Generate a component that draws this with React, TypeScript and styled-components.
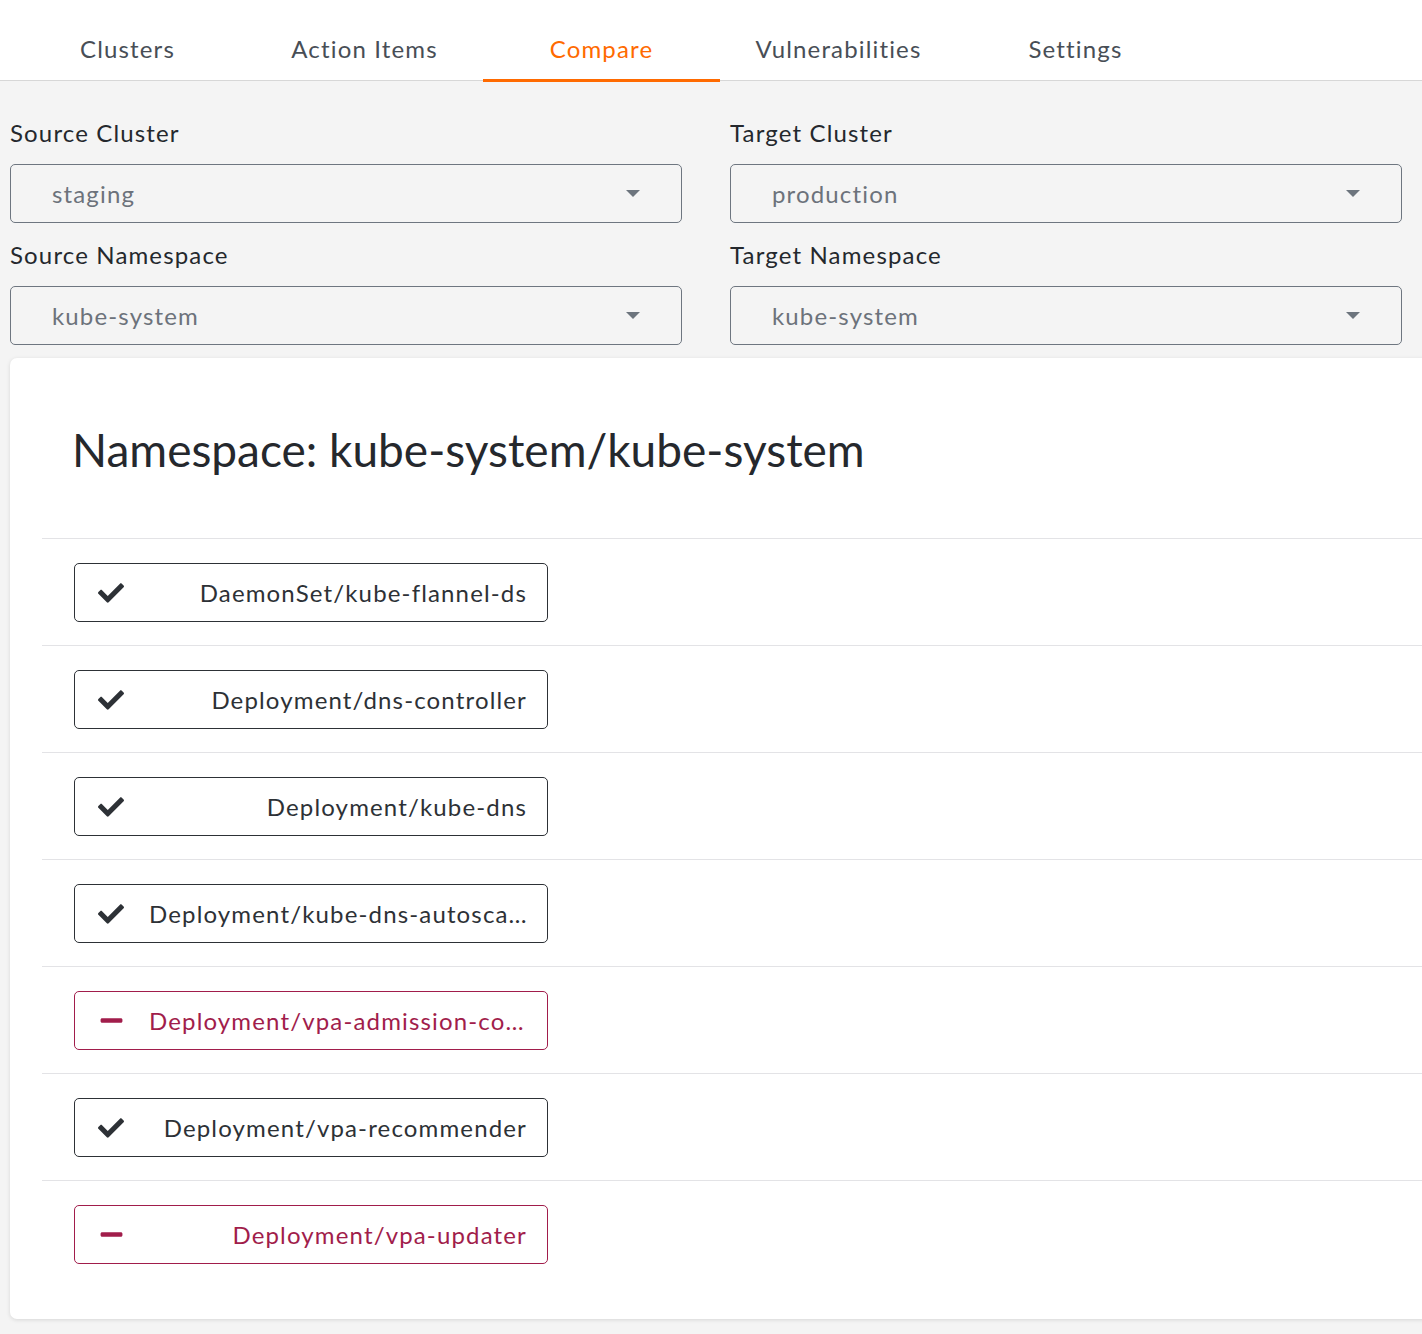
import styled, { createGlobalStyle } from "styled-components";
import { FaCheck, FaMinus } from "react-icons/fa";

const GlobalStyle = createGlobalStyle`
  html, body {
    margin: 0;
    padding: 0;
    background: #f4f4f4;
    overflow-x: hidden;
  }
  body {
    font-family: Lato, "Liberation Sans", sans-serif;
    letter-spacing: 1.15px;
  }
`;

const TabBar = styled.nav`
  display: flex;
  height: 80px;
  padding-left: 9px;
  background: #ffffff;
  border-bottom: 1px solid #d7d7d7;
`;

const Tab = styled.div<{ $active?: boolean }>`
  position: relative;
  width: 237px;
  padding-top: 32px;
  box-sizing: border-box;
  text-align: center;
  font-size: 24px;
  line-height: 34px;
  color: ${({ $active }) => ($active ? "#ff6a00" : "#484e56")};

  &::after {
    content: "";
    display: ${({ $active }) => ($active ? "block" : "none")};
    position: absolute;
    left: 0;
    right: 0;
    bottom: -2px;
    height: 3px;
    background: #ff6a00;
  }
`;

const Content = styled.main`
  padding: 36px 20px 14px 10px;
`;

const FieldGrid = styled.div`
  display: grid;
  grid-template-columns: 1fr 1fr;
  column-gap: 48px;
  row-gap: 16px;
`;

const Field = styled.div`
  display: flex;
  flex-direction: column;
  gap: 15px;
`;

const Label = styled.label`
  font-size: 24px;
  line-height: 32px;
  color: #24282d;
`;

const Select = styled.div`
  display: flex;
  align-items: center;
  justify-content: space-between;
  height: 59px;
  box-sizing: border-box;
  padding: 0 41px 0 41px;
  border: 1px solid #6e7680;
  border-radius: 5px;
  background: #f4f4f4;
  font-size: 24px;
  color: #6c727b;
`;

const Caret = styled.span`
  width: 0;
  height: 0;
  border-left: 7px solid transparent;
  border-right: 7px solid transparent;
  border-top: 7px solid #6c747d;
`;

const Card = styled.section`
  margin-top: 13px;
  margin-right: -40px;
  padding: 0 0 32px 32px;
  background: #ffffff;
  border-radius: 7px;
  box-shadow: 0 1px 4px rgba(0, 0, 0, 0.12);
`;

const Heading = styled.h1`
  margin: 0;
  padding: 64px 30px 60px;
  font-size: 46px;
  line-height: 56px;
  font-weight: 400;
  letter-spacing: 0;
  color: #25282d;
`;

const Row = styled.div`
  border-top: 1px solid #e3e3e6;
  padding: 24px 0 23px 32px;
`;

const Item = styled.div<{ $missing?: boolean }>`
  display: flex;
  align-items: center;
  gap: 25px;
  width: 474px;
  height: 59px;
  box-sizing: border-box;
  padding: 0 20px 0 23px;
  border: 1px solid ${({ $missing }) => ($missing ? "#a11d4b" : "#2d3136")};
  border-radius: 5px;
  color: ${({ $missing }) => ($missing ? "#a11d4b" : "#2d3136")};
`;

const IconBox = styled.span`
  display: flex;
  justify-content: flex-end;
  flex: 0 0 26px;
`;

const ItemName = styled.span`
  flex: 1;
  min-width: 0;
  text-align: right;
  font-size: 24px;
  letter-spacing: 1.15px;
  white-space: nowrap;
  overflow: hidden;
  text-overflow: ellipsis;
`;

const tabs = ["Clusters", "Action Items", "Compare", "Vulnerabilities", "Settings"];

const fields = [
  { label: "Source Cluster", value: "staging" },
  { label: "Target Cluster", value: "production" },
  { label: "Source Namespace", value: "kube-system" },
  { label: "Target Namespace", value: "kube-system" },
];

const resources = [
  { name: "DaemonSet/kube-flannel-ds", missing: false },
  { name: "Deployment/dns-controller", missing: false },
  { name: "Deployment/kube-dns", missing: false },
  { name: "Deployment/kube-dns-autoscaler", missing: false },
  { name: "Deployment/vpa-admission-controller", missing: true },
  { name: "Deployment/vpa-recommender", missing: false },
  { name: "Deployment/vpa-updater", missing: true },
];

export default function App() {
  return (
    <>
      <GlobalStyle />
      <TabBar>
        {tabs.map((t) => (
          <Tab key={t} $active={t === "Compare"}>
            {t}
          </Tab>
        ))}
      </TabBar>
      <Content>
        <FieldGrid>
          {fields.map((f) => (
            <Field key={f.label}>
              <Label>{f.label}</Label>
              <Select>
                <span>{f.value}</span>
                <Caret />
              </Select>
            </Field>
          ))}
        </FieldGrid>
        <Card>
          <Heading>Namespace: kube-system/kube-system</Heading>
          {resources.map((r) => (
            <Row key={r.name}>
              <Item $missing={r.missing}>
                <IconBox>
                  {r.missing ? <FaMinus size={25} /> : <FaCheck size={26} />}
                </IconBox>
                <ItemName>{r.name}</ItemName>
              </Item>
            </Row>
          ))}
        </Card>
      </Content>
    </>
  );
}
